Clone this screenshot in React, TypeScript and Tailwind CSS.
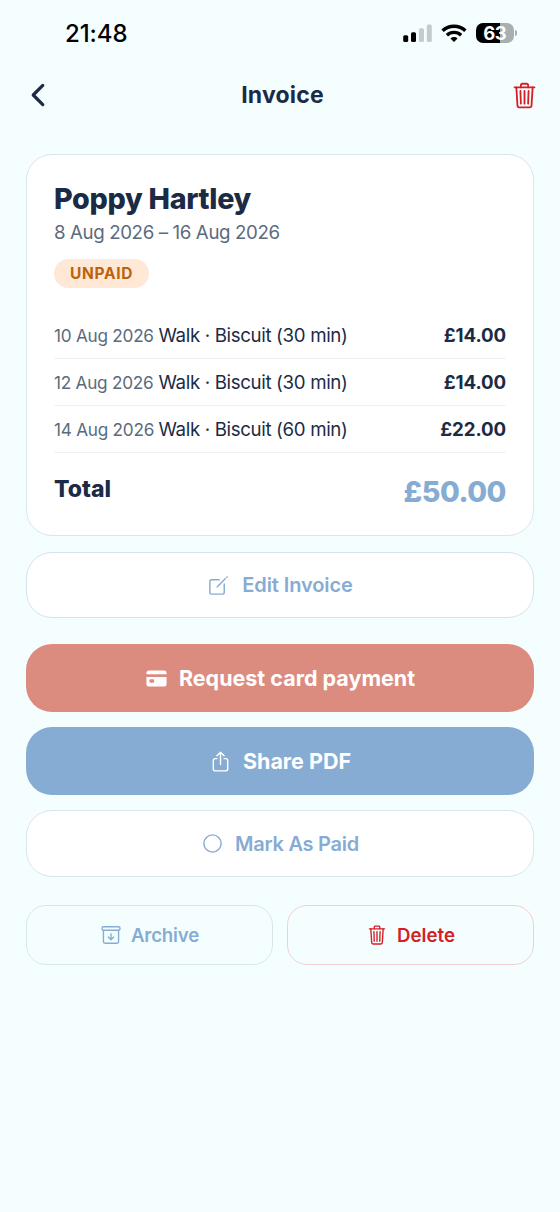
import React from 'react';
import {
  IoArchiveOutline,
  IoCard,
  IoChevronBack,
  IoCreateOutline,
  IoEllipseOutline,
  IoShareOutline,
  IoTrashOutline,
} from 'react-icons/io5';

interface InvoiceLine {
  date: string;
  label: string;
  amount: string;
}

const lines: InvoiceLine[] = [
  { date: '10 Aug 2026', label: 'Walk · Biscuit (30 min)', amount: '£14.00' },
  { date: '12 Aug 2026', label: 'Walk · Biscuit (30 min)', amount: '£14.00' },
  { date: '14 Aug 2026', label: 'Walk · Biscuit (60 min)', amount: '£22.00' },
];

const StatusBar: React.FC = () => (
  <div className="flex h-[66px] items-center justify-between pl-[65px] pr-[43px] text-black">
    <span className="pt-[1px] text-[24px] font-medium leading-none tracking-[-0.1px]">21:48</span>
    <div className="flex items-center">
      <svg className="h-[19px] w-[30px]" viewBox="0 0 30 19">
        <rect x="0.2" y="11.3" width="5" height="6.7" rx="1.5" />
        <rect x="8" y="8.3" width="5" height="9.7" rx="1.5" />
        <rect x="16" y="4.3" width="5" height="13.7" rx="1.5" fill="#c5cccd" />
        <rect x="23.8" y="0.4" width="5" height="17.6" rx="1.5" fill="#c5cccd" />
      </svg>
      <svg className="ml-[8px] h-[19px] w-[26px]" viewBox="0 0 26 19" fill="none" stroke="black">
        <path d="M1.6 6.8a16.4 16.4 0 0 1 22.8 0" strokeWidth="3.5" />
        <path d="M5.9 11.2a10.3 10.3 0 0 1 14.2 0" strokeWidth="3.3" />
        <path d="M13 18l-3.6-3.6a5.2 5.2 0 0 1 7.2 0z" fill="black" stroke="none" />
      </svg>
      <div className="relative ml-[9px] flex h-[20px] w-[37.5px] items-center justify-center overflow-hidden rounded-[7px] bg-[linear-gradient(90deg,#000_24px,#a8afb0_24px)]">
        <span className="text-[18.5px] font-bold leading-none tracking-[-0.6px] text-white">63</span>
      </div>
      <div className="ml-[1.5px] h-[6px] w-[2px] rounded-r-full bg-[#a8afb0]" />
    </div>
  </div>
);

export default function App() {
  return (
    <div className="h-[1212px] w-[560px] bg-[#f5feff] font-['Inter',sans-serif] text-[#1c2b45]">
      <StatusBar />

      <header className="flex h-[58px] items-center justify-between pl-[21px] pr-[21px]">
        <IoChevronBack className="size-[34px]" />
        <h1 className="text-[23px] font-bold leading-none tracking-[0.2px]">Invoice</h1>
        <IoTrashOutline className="size-[29px] text-[#d32027]" />
      </header>

      <main className="px-[26px] pt-[30px]">
        <section className="h-[382px] rounded-[26px] border border-[#d9e6ea] bg-white px-[27px] pt-[27px]">
          <h2 className="text-[28.7px] font-extrabold leading-[34px] tracking-[-0.3px]">Poppy Hartley</h2>
          <p className="mt-[5px] text-[18.7px] leading-[24px] tracking-[-0.38px] text-[#5b6b7d]">
            8 Aug 2026 – 16 Aug 2026
          </p>
          <div className="mt-[14px] flex h-[29px] w-[95px] items-center justify-center rounded-full bg-[#ffe8d6] text-[15.5px] font-bold tracking-[0.7px] text-[#bd620d]">
            UNPAID
          </div>

          <div className="mt-[24px]">
            {lines.map((line) => (
              <div
                key={line.date}
                className="flex h-[47px] items-center justify-between border-b border-[#edf2f4] pt-[2px] text-[18.7px]"
              >
                <div className="flex items-baseline">
                  <span className="w-[104.5px] text-[17.2px] tracking-[-0.25px] text-[#5b6b7d]">{line.date}</span>
                  <span className="tracking-[-0.35px]">{line.label}</span>
                </div>
                <span className="font-bold tracking-[-0.1px]">{line.amount}</span>
              </div>
            ))}
          </div>

          <div className="mt-[20px] flex items-start justify-between">
            <span className="text-[23px] font-extrabold leading-[32px]">Total</span>
            <span className="text-[28.7px] font-extrabold leading-[38px] tracking-[-0.45px] text-[#86acd3]">
              £50.00
            </span>
          </div>
        </section>

        <button className="mt-[16px] flex h-[66px] w-full items-center justify-center gap-[12px] rounded-[26px] border border-[#d3e4ec] bg-white text-[20px] font-semibold tracking-[-0.1px] text-[#86acd3]">
          <IoCreateOutline className="size-[23px]" />
          <span>Edit Invoice</span>
        </button>

        <button className="mt-[26px] flex h-[68px] w-full items-center justify-center gap-[11px] rounded-[26px] bg-[#db8c7f] text-[21.5px] font-bold text-white">
          <IoCard className="size-[23px]" />
          <span>Request card payment</span>
        </button>

        <button className="mt-[15px] flex h-[68px] w-full items-center justify-center gap-[11px] rounded-[26px] bg-[#86acd3] text-[21.5px] font-bold text-white">
          <IoShareOutline className="size-[23px]" />
          <span>Share PDF</span>
        </button>

        <button className="mt-[15px] flex h-[67px] w-full items-center justify-center gap-[11px] rounded-[26px] border border-[#d9e6ea] bg-white text-[20px] font-semibold tracking-[-0.25px] text-[#86acd3]">
          <IoEllipseOutline className="size-[23px]" />
          <span>Mark As Paid</span>
        </button>

        <div className="mt-[28px] grid grid-cols-2 gap-[14px]">
          <button className="flex h-[60px] items-center justify-center gap-[9px] rounded-[20px] border border-[#d9e6ea] text-[18.7px] font-semibold tracking-[-0.2px] text-[#86acd3]">
            <IoArchiveOutline className="size-[22px]" />
            <span className="pt-[2px]">Archive</span>
          </button>
          <button className="flex h-[60px] items-center justify-center gap-[9px] rounded-[20px] border border-[#f2cfd1] text-[18.7px] font-semibold text-[#d32027]">
            <IoTrashOutline className="size-[22px]" />
            <span className="pt-[2px]">Delete</span>
          </button>
        </div>
      </main>
    </div>
  );
}
